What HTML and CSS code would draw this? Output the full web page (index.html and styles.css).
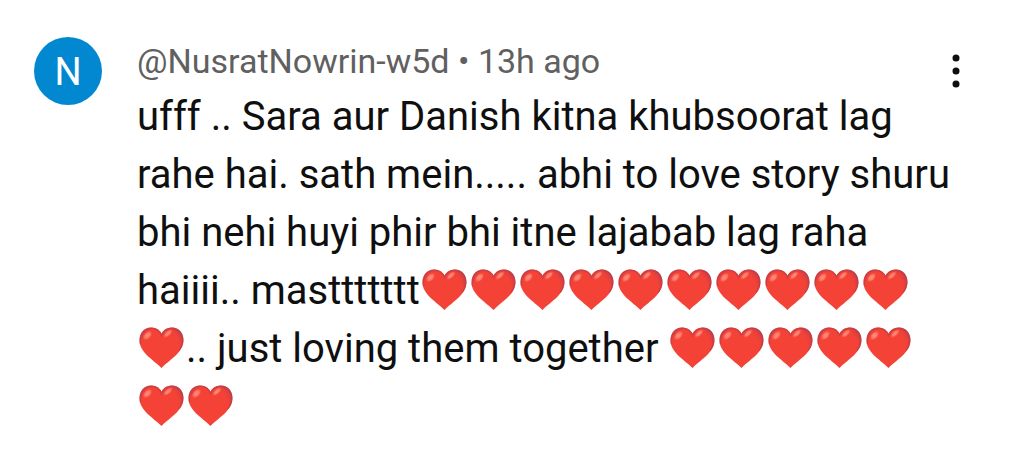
FILE: index.html
```html
<!DOCTYPE html>
<html lang="en">
<head>
<meta charset="utf-8">
<meta name="viewport" content="width=device-width, initial-scale=1.0">
<title>Comment</title>
<link rel="stylesheet" href="styles.css">
</head>
<body>
<svg class="defs" aria-hidden="true">
  <defs>
    <radialGradient id="shine">
      <stop offset="0" stop-color="#ff8d7a"/>
      <stop offset=".5" stop-color="#ff8070" stop-opacity=".9"/>
      <stop offset="1" stop-color="#f44336" stop-opacity="0"/>
    </radialGradient>
    <radialGradient id="fill" gradientUnits="userSpaceOnUse" cx="23" cy="20" r="27">
      <stop offset="0.7" stop-color="#f44336"/>
      <stop offset="0.88" stop-color="#dc3d40"/>
      <stop offset="1" stop-color="#b03a52"/>
    </radialGradient>
  </defs>
  <symbol id="heart" viewBox="0 0 49 42">
    <path fill="url(#fill)" d="M24.500 6.500C22.500 2.500 18.500 .5 14 .5C7.500 .5 2.500 5.500 2.500 13C2.500 25.500 15 31.500 24.500 41C34 31.500 46.500 25.500 46.500 13C46.500 5.500 41.500 .5 35 .5C30.500 .5 26.500 2.500 24.500 6.500Z"/>
    <path fill="none" stroke="#b2404f" stroke-opacity=".6" stroke-width="1.500" d="M3.400 17C2.300 8 7 1.300 14 1.300C19 1.300 23 4 24.500 8.500C26.500 4 30.500 1.300 35 1.300C41 1.300 45.700 6 45.700 13C45.700 17 44.300 20.500 42 23.500"/>
    <ellipse fill="url(#shine)" cx="10.500" cy="8.500" rx="6.500" ry="4" transform="rotate(-45 10.500 8.500)"/>
    <ellipse fill="url(#shine)" cx="31" cy="6.500" rx="6.500" ry="3" transform="rotate(-42 31 6.500)"/>
  </symbol>
</svg>
<article class="comment">
  <div class="avatar">N</div>
  <div class="content">
    <header class="meta">@NusratNowrin-w5d • 13h ago</header>
    <p class="text">ufff .. Sara aur Danish kitna khubsoorat lag rahe hai. sath mein..... abhi to love story shuru bhi nehi huyi phir bhi itne lajabab lag raha haiiii.. masttttttt<svg class="heart"><use href="#heart"/></svg><svg class="heart"><use href="#heart"/></svg><svg class="heart"><use href="#heart"/></svg><svg class="heart"><use href="#heart"/></svg><svg class="heart"><use href="#heart"/></svg><svg class="heart"><use href="#heart"/></svg><svg class="heart"><use href="#heart"/></svg><svg class="heart"><use href="#heart"/></svg><svg class="heart"><use href="#heart"/></svg><svg class="heart"><use href="#heart"/></svg><br><svg class="heart"><use href="#heart"/></svg>.. just loving them together <svg class="heart"><use href="#heart"/></svg><svg class="heart"><use href="#heart"/></svg><svg class="heart"><use href="#heart"/></svg><svg class="heart"><use href="#heart"/></svg><svg class="heart"><use href="#heart"/></svg><br><svg class="heart"><use href="#heart"/></svg><svg class="heart"><use href="#heart"/></svg></p>
  </div>
  <button class="menu" type="button" aria-label="More options">
    <svg width="8" height="34" viewBox="0 0 8 34" fill="#0f0f0f">
      <circle cx="4" cy="4" r="3.500"/>
      <circle cx="4" cy="17" r="3.500"/>
      <circle cx="4" cy="30" r="3.500"/>
    </svg>
  </button>
</article>
</body>
</html>
```
FILE: styles.css
```css
body {
  margin: 0;
  background: #fff;
  color: #0f0f0f;
  font-family: Roboto, "Liberation Sans", sans-serif;
}

.defs {
  display: block;
  width: 0;
  height: 0;
}

.comment {
  display: flex;
  align-items: flex-start;
  padding: 37px 64px 16px 34px;
}

.avatar {
  flex: none;
  width: 68px;
  height: 68px;
  margin-right: 35px;
  border-radius: 50%;
  background: #0288d1;
  color: #fff;
  font-size: 38px;
  line-height: 70px;
  text-align: center;
}

.content {
  flex: 1;
  min-width: 0;
}

.meta {
  color: #606060;
  font-size: 34px;
  line-height: 48px;
}

.text {
  margin: 3px 0 0;
  font-size: 40px;
  line-height: 58px;
}

.heart {
  width: 49px;
  height: 42px;
  vertical-align: -7px;
}

.menu {
  flex: none;
  display: flex;
  margin-top: 17px;
  padding: 0;
  border: 0;
  background: none;
  cursor: pointer;
}
```
